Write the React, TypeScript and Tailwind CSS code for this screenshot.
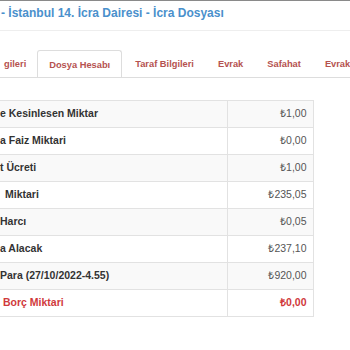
const rows = [
  { label: "e Kesinlesen Miktar", value: "₺1,00", pad: "pl-0" },
  { label: "a Faiz Miktari", value: "₺0,00", pad: "pl-0" },
  { label: "t Ücreti", value: "₺1,00", pad: "pl-0" },
  { label: "Miktari", value: "₺235,05", pad: "pl-[5px]" },
  { label: "Harcı", value: "₺0,05", pad: "pl-0" },
  { label: "a Alacak", value: "₺237,10", pad: "pl-0" },
  { label: "Para (27/10/2022-4.55)", value: "₺920,00", pad: "pl-0" },
];

const tabs = ["Dosya Hesabı", "Taraf Bilgileri", "Evrak", "Safahat", "Evrak"];

export default function App() {
  return (
    <div className="h-[350px] w-[350px] overflow-hidden bg-white font-['Liberation_Sans',Arial,sans-serif]">
      <div className="h-px bg-[#8a8a8a]" />

      {/* Title */}
      <h2 className="h-[30px] whitespace-nowrap border-b border-[#eeeeee] pl-px pt-[5px] text-[12px] font-bold leading-[14px] text-[#4a90cc]">
        - İstanbul 14. İcra Dairesi - İcra Dosyası
      </h2>

      {/* Tabs */}
      <div className="mt-[19px] flex h-[28px] items-end overflow-hidden whitespace-nowrap border-b border-[#dddddd] text-[9.3px] font-bold text-[#b5524f]">
        <div className="flex h-[27px] items-center pl-[4px] pr-[11px] pt-[3px]">gileri</div>
        {tabs.map((t, i) =>
          i === 0 ? (
            <div
              key={i}
              className="-mb-px mr-[2px] flex h-[28px] items-center rounded-t-[3px] border border-b-0 border-[#dddddd] bg-white px-[11px] pt-[3px]"
            >
              {t}
            </div>
          ) : (
            <div key={i} className="mr-[2px] flex h-[27px] items-center px-[11px] pt-[3px]">
              {t}
            </div>
          )
        )}
      </div>

      {/* Dosya hesabı tablosu */}
      <table className="mt-[22px] w-[313px] table-fixed border-collapse text-[10.5px]">
        <colgroup>
          <col className="w-[227px]" />
          <col className="w-[86px]" />
        </colgroup>
        <tbody>
          {rows.map((r, i) => (
            <tr key={i} className={i % 2 === 0 ? "bg-[#f9f9f9]" : "bg-white"}>
              <td className={`h-[27px] whitespace-nowrap border-y border-[#e2e2e2] font-bold text-[#333333] ${r.pad}`}>
                {r.label}
              </td>
              <td className="h-[27px] border border-[#e2e2e2] pr-[6px] text-right text-[#555555]">{r.value}</td>
            </tr>
          ))}
          <tr className="bg-white">
            <td className="h-[27px] whitespace-nowrap border-y border-[#e2e2e2] pl-[3px] font-bold text-[#d0393b]">
              Borç Miktari
            </td>
            <td className="h-[27px] border border-[#e2e2e2] pr-[6px] text-right font-bold text-[#d0393b]">₺0,00</td>
          </tr>
        </tbody>
      </table>
    </div>
  );
}
